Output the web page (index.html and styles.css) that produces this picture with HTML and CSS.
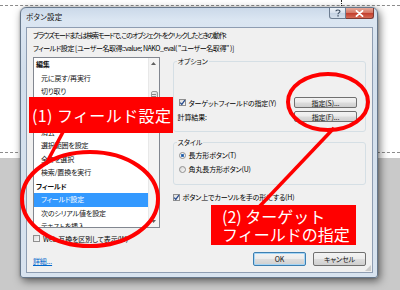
FILE: index.html
```html
<!DOCTYPE html>
<html lang="ja">
<head>
<meta charset="utf-8">
<title>ボタン設定</title>
<link rel="stylesheet" href="styles.css">
</head>
<body>
<div class="stage">
  <div class="bg-gray"></div>
  <div class="bg-guide"></div>
  <div class="bg-tick"></div>
  <div class="bg-line"></div>

  <div class="window">
    <div class="titlebar">
      <span class="title">ボタン設定</span>
      <div class="caption-btns">
        <span class="cb help"><svg width="6" height="8" viewBox="0 0 6 8"><path d="M1 2.2 C1 0.6 5 0.6 5 2.3 C5 3.6 3 3.6 3 5.2" fill="none" stroke="#3a4a5e" stroke-width="1.1"/><rect x="2.4" y="6.2" width="1.3" height="1.3" fill="#3a4a5e"/></svg></span>
        <span class="cb close"><svg width="9" height="7" viewBox="0 0 9 7"><path d="M1.5 0.8 L7.5 6.2 M7.5 0.8 L1.5 6.2" stroke="#fff" stroke-width="1.8" stroke-linecap="round"/></svg></span>
      </div>
    </div>
    <div class="client">
      <p class="desc d1">ブラウズモードまたは検索モードで、このオブジェクトをクリックしたときの動作:</p>
      <p class="desc d2">フィールド設定 [ユーザー名取得::value; NAKO_eval( "ユーザー名取得" )]</p>
      <div class="main">
        <div class="listbox">
          <ul class="items">
            <li class="head">編集</li>
            <li>元に戻す/再実行</li>
            <li>切り取り</li>
            <li>コピー</li>
            <li>貼り付け</li>
            <li>消去</li>
            <li>選択範囲を設定</li>
            <li>全てを選択</li>
            <li>検索/置換を実行</li>
            <li class="head">フィールド</li>
            <li class="sel">フィールド設定</li>
            <li>次のシリアル値を設定</li>
            <li>テキストを挿入</li>
          </ul>
          <div class="scrollbar">
            <svg class="arrow" width="5" height="3" viewBox="0 0 5 3"><path d="M0 3 L2.5 0 L5 3 Z" fill="#606060"/></svg>
            <div class="thumb-area">
              <div class="thumb"><i></i><i></i><i></i></div>
            </div>
            <svg class="arrow" width="5" height="3" viewBox="0 0 5 3"><path d="M0 0 L2.5 3 L5 0 Z" fill="#606060"/></svg>
          </div>
        </div>
        <div class="panel">
          <fieldset class="group options">
            <legend>オプション</legend>
            <div class="opt-row">
              <label class="check"><span class="box"><svg width="7" height="7" viewBox="0 0 7 7"><path d="M1.2 3.6 L2.8 5.4 L5.9 1.2" fill="none" stroke="#2a4d8f" stroke-width="1.3"/></svg></span>ターゲットフィールドの指定(Y)</label>
              <button class="btn small">指定(S)...</button>
            </div>
            <div class="opt-row">
              <span class="label">計算結果:</span>
              <button class="btn small">指定(F)...</button>
            </div>
          </fieldset>
          <fieldset class="group style">
            <legend>スタイル</legend>
            <label class="radio"><span class="dot on"></span>長方形ボタン(T)</label>
            <label class="radio"><span class="dot"></span>角丸長方形ボタン(U)</label>
          </fieldset>
          <label class="check hand"><span class="box"><svg width="7" height="7" viewBox="0 0 7 7"><path d="M1.2 3.6 L2.8 5.4 L5.9 1.2" fill="none" stroke="#2a4d8f" stroke-width="1.3"/></svg></span>ボタン上でカーソルを手の形にする(H)</label>
        </div>
      </div>
      <label class="check web"><span class="box"></span>Web 互換を区別して表示(W)</label>
      <div class="footer">
        <a class="link" href="#">詳細...</a>
        <div class="btns">
          <button class="btn dlg default">OK</button>
          <button class="btn dlg">キャンセル</button>
        </div>
      </div>
      <div class="grip"></div>
    </div>
  </div>

  <svg class="marks" width="400" height="290" viewBox="0 0 400 290">
    <ellipse cx="90" cy="199" rx="68" ry="47" fill="none" stroke="#ff0000" stroke-width="4"/>
    <ellipse cx="328" cy="102" rx="40" ry="28" fill="none" stroke="#ff0000" stroke-width="4"/>
    <line x1="63" y1="132" x2="46" y2="164" stroke="#ff0000" stroke-width="3.5"/>
    <line x1="334" y1="128" x2="259" y2="207" stroke="#ff0000" stroke-width="3.5"/>
  </svg>
  <div class="callout c1">(1) フィールド設定</div>
  <div class="callout c2">(2) ターゲット<br>フィールドの指定</div>
</div>
</body>
</html>
```

FILE: styles.css
```css
* { box-sizing: border-box; margin: 0; padding: 0; }

body {
  margin: 0;
  width: 400px;
  height: 290px;
  overflow: hidden;
  background: #ffffff;
  font-family: "Noto Sans CJK JP", "Noto Sans", sans-serif;
  font-feature-settings: "palt";
  color: #000;
}

.stage { position: relative; width: 400px; height: 290px; }

/* desktop / layout canvas behind the window */
.bg-gray { position: absolute; left: 0; right: 0; top: 158px; bottom: 0; background: #c9c9c9; }
.bg-guide { position: absolute; left: 0; right: 0; top: 5px; border-top: 1px dashed #8c8c8c; }
.bg-tick { position: absolute; left: 341px; top: 0; height: 8px; border-left: 1px dotted #222; }
.bg-line { position: absolute; left: 0; right: 0; top: 152px; border-top: 1px dashed #8c8c8c; }

/* window frame */
.window {
  position: absolute;
  left: 20px;
  top: 7px;
  width: 358px;
  height: 271px;
  display: flex;
  flex-direction: column;
  padding: 0 4px 4px 5px;
  border: 1px solid #66778b;
  border-radius: 6px 6px 3px 3px;
  background: linear-gradient(180deg, #cbd9e9 0px, #dbe6f2 12px, #d3dfec 60px, #d8e3ef 100%);
  box-shadow: 2px 3px 8px rgba(0, 0, 0, 0.55), 0 0 2px rgba(0, 0, 0, 0.3);
}

.titlebar {
  height: 19px;
  flex: none;
  display: flex;
  align-items: flex-start;
  justify-content: space-between;
}
.title {
  font-size: 7.5px;
  line-height: 10px;
  margin-top: 4px;
  letter-spacing: 0.2px;
  color: #111;
}
.caption-btns { display: flex; margin-right: -1px; }
.cb {
  height: 11px;
  display: flex;
  align-items: center;
  justify-content: center;
  border: 1px solid #6d7d91;
  border-top: none;
}
.help {
  width: 17px;
  border-radius: 0 0 0 3px;
  background: linear-gradient(180deg, #eef3f9 0%, #d7e1ed 50%, #c4d2e3 51%, #d5e0ec 100%);
}
.close {
  width: 28px;
  border-left: none;
  border-color: #7e3a34;
  border-radius: 0 0 3px 0;
  background: linear-gradient(180deg, #e7a999 0%, #d77a68 45%, #c4402f 55%, #d46a55 100%);
}

/* client area */
.client {
  position: relative;
  flex: 1;
  background: #f0f0f0;
  border: 1px solid #8e9db2;
  padding: 1px 6px 0 6px;
  font-size: 7px;
  letter-spacing: -0.15px;
  display: flex;
  flex-direction: column;
}
.desc { height: 13px; line-height: 13px; white-space: nowrap; }
.d1 { letter-spacing: -1.1px; }
.d2 { letter-spacing: -0.45px; }

.main { display: flex; margin-top: 2px; }

.listbox {
  width: 127px;
  height: 171px;
  display: flex;
  border: 1px solid #828790;
  background: #fff;
}
.items { list-style: none; flex: 1; overflow: hidden; }
.items li { height: 13.5px; line-height: 13.5px; padding-left: 7px; white-space: nowrap; color: #111; }
.items li.head { padding-left: 2px; font-weight: bold; }
.items li.sel { background: #3399ff; color: #fff; }

.scrollbar {
  width: 11px;
  display: flex;
  flex-direction: column;
  align-items: center;
  background: #f4f4f4;
  border-left: 1px solid #e8e8e8;
  padding: 4px 0 4px;
}
.arrow { flex: none; }
.thumb-area { flex: 1; width: 100%; padding: 26px 1px 0 2px; }
.thumb {
  height: 11px;
  border: 1px solid #9a9a9a;
  border-radius: 2px;
  background: linear-gradient(90deg, #f2f2f2, #dcdcdc);
  display: flex;
  flex-direction: column;
  justify-content: center;
  align-items: center;
  gap: 1px;
}
.thumb i { display: block; width: 4px; height: 1px; background: #8a8a8a; }

.panel { width: 194px; margin-left: 13px; display: flex; flex-direction: column; }

.group {
  border: 1px solid #d5dfe5;
  border-radius: 3px;
  padding: 0 8px 0 5px;
}
.group legend {
  margin-left: -2px;
  padding: 0 1px;
  height: 9px;
  line-height: 9px;
  color: #111;
}
.options { padding-top: 31px; padding-bottom: 9px; }
.opt-row { display: flex; justify-content: space-between; align-items: center; height: 11px; }
.opt-row + .opt-row { margin-top: 3px; }
.label { margin-left: -1px; }

.style { margin-top: 6px; padding-top: 1px; padding-bottom: 8px; }

.check, .radio {
  display: flex;
  align-items: center;
  white-space: nowrap;
  height: 14px;
}
.box {
  width: 7px;
  height: 7px;
  margin-right: 3px;
  border: 1px solid #8f8f8f;
  background: linear-gradient(135deg, #dcdcdc, #fafafa);
  display: flex;
  align-items: center;
  justify-content: center;
  flex: none;
}
.box svg { display: block; margin: -1px; }
.dot {
  width: 7px;
  height: 7px;
  margin-right: 3px;
  border-radius: 50%;
  border: 1px solid #8f8f8f;
  background: linear-gradient(135deg, #d6d6d6, #fafafa);
  flex: none;
}
.dot.on { background: radial-gradient(circle, #1f4f93 0, #4a86c8 1.6px, #f4f4f4 2px); }

.opt-row .check { height: 11px; }
.hand { margin-top: 5px; }

.web { margin-top: 4px; height: 13px; }

.footer {
  margin-top: 7px;
  display: flex;
  justify-content: space-between;
  align-items: flex-start;
}
.link { color: #0066cc; text-decoration: underline; margin-top: 5px; line-height: 9px; }
.btns { display: flex; gap: 7px; }

.btn {
  font-family: inherit;
  font-feature-settings: "palt";
  font-size: 7px;
  letter-spacing: -0.1px;
  color: #111;
  border: 1px solid #707070;
  border-radius: 2px;
  background: linear-gradient(180deg, #f3f3f3 0%, #ebebeb 48%, #dddddd 52%, #cfcfcf 100%);
  display: flex;
  align-items: center;
  justify-content: center;
  padding: 0;
}
.btn.small { width: 63px; height: 11px; }
.btn.dlg { width: 53px; height: 14px; }
.btn.default { border-color: #3c7fb1; box-shadow: inset 0 0 0 1px #a6d5f5; }

.grip {
  position: absolute;
  right: 1px;
  bottom: 1px;
  width: 6px;
  height: 6px;
  background: radial-gradient(circle, #a0a0a0 0.6px, transparent 0.8px) 0 0 / 2px 2px;
  clip-path: polygon(100% 0, 100% 100%, 0 100%);
}

/* red annotations */
.marks { position: absolute; left: 0; top: 0; pointer-events: none; }
.callout {
  position: absolute;
  background: #ff0000;
  color: #fff;
  font-size: 16px;
  white-space: nowrap;
  font-feature-settings: normal;
}
.c1 { left: 29px; top: 97px; width: 144px; height: 36px; padding: 9px 0 0 3px; line-height: 18px; letter-spacing: 0.4px; }
.c2 { left: 211px; top: 205px; width: 145px; height: 40px; padding: 2px 0 0 11px; line-height: 18px; }
```
